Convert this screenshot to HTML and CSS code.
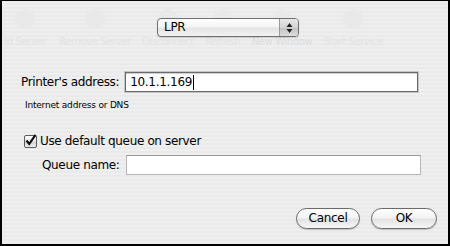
FILE: index.html
```html
<!DOCTYPE html>
<html>
<head>
<meta charset="utf-8">
<link rel="stylesheet" href="styles.css">
</head>
<body>
<div class="dialog">
  <div class="ghost" aria-hidden="true">
    <div class="ghost-item g1"><span class="ghost-icon"></span><span class="ghost-label">ld Server</span></div>
    <div class="ghost-item g2"><span class="ghost-icon"></span><span class="ghost-label">Remove Server</span></div>
    <div class="ghost-item g3"><span class="ghost-icon"></span><span class="ghost-label">Disconnect</span></div>
    <div class="ghost-item g4"><span class="ghost-icon"></span><span class="ghost-label">Refresh</span></div>
    <div class="ghost-item g5"><span class="ghost-icon"></span><span class="ghost-label">New Window</span></div>
    <div class="ghost-item g6"><span class="ghost-icon"></span><span class="ghost-label">Start Service</span></div>
  </div>

  <div class="popup-row">
    <div class="popup">
      <span class="popup-text">LPR</span>
      <span class="popup-arrows">
        <svg width="9" height="12" viewBox="0 0 9 12"><path d="M4.5 1 L7.5 5 L1.5 5 Z M4.5 11 L7.5 7 L1.5 7 Z" fill="#222"/></svg>
      </span>
    </div>
  </div>

  <div class="addr-row">
    <span class="label">Printer's address:</span>
    <div class="field focus"><span>10.1.1.169</span><span class="caret"></span></div>
  </div>
  <div class="hint">Internet address or DNS</div>

  <div class="check-row">
    <span class="checkbox">
      <svg width="13" height="13" viewBox="0 0 13 13"><path d="M2.5 6.5 L5.2 10 L11.5 0.8" fill="none" stroke="#111" stroke-width="2.2"/></svg>
    </span>
    <span class="label">Use default queue on server</span>
  </div>
  <div class="queue-row">
    <span class="label">Queue name:</span>
    <div class="field"></div>
  </div>

  <div class="buttons">
    <div class="btn">Cancel</div>
    <div class="btn">OK</div>
  </div>
</div>
</body>
</html>
```

FILE: styles.css
```css
html, body {
  margin: 0;
  padding: 0;
}
body {
  width: 450px;
  height: 246px;
  overflow: hidden;
  font-family: "DejaVu Sans", sans-serif;
  color: #000;
}
.dialog {
  position: relative;
  box-sizing: border-box;
  width: 450px;
  height: 246px;
  border: 2px solid #000;
  border-top-width: 1px;
  background: repeating-linear-gradient(180deg, #efefef 0, #efefef 2px, #eaeaea 2px, #eaeaea 4px);
  padding: 17px 0 0 0;
  overflow: hidden;
}
.ghost {
  position: absolute;
  inset: 0;
  pointer-events: none;
}
.ghost-item {
  position: absolute;
  top: 8px;
  width: 80px;
  display: flex;
  flex-direction: column;
  align-items: center;
  gap: 7px;
}
.ghost-icon {
  width: 20px;
  height: 20px;
  border-radius: 50%;
  background: #e9e9e9;
}
.ghost-label {
  font-size: 10px;
  color: #e3e3e3;
  white-space: nowrap;
  letter-spacing: -0.4px;
}
.g1 { left: -17px; }
.g2 { left: 53px; }
.g3 { left: 126px; }
.g4 { left: 181px; }
.g5 { left: 240px; }
.g5 .ghost-label { color: #dcdcdc; }
.g6 { left: 311px; }

.popup-row {
  position: relative;
  display: flex;
  justify-content: center;
  padding-left: 6px;
}
.popup {
  display: flex;
  width: 142px;
  height: 19px;
  box-sizing: border-box;
  border: 1px solid #6f6f6f;
  border-radius: 4px;
  background: linear-gradient(180deg, #ffffff 0%, #f4f4f4 45%, #e4e4e4 55%, #f2f2f2 100%);
  box-shadow: 0 1px 1px rgba(0,0,0,0.15);
  overflow: hidden;
}
.popup-text {
  flex: 1;
  font-size: 12px;
  line-height: 17px;
  padding-left: 6px;
  letter-spacing: -0.3px;
}
.popup-arrows {
  width: 18px;
  display: flex;
  align-items: center;
  justify-content: center;
  border-left: 1px solid #9a9a9a;
  background: linear-gradient(180deg, #e8e8e8 0%, #d4d4d4 50%, #c4c4c4 55%, #dcdcdc 100%);
}

.addr-row {
  position: relative;
  display: flex;
  align-items: center;
  margin-top: 35px;
  padding-left: 19px;
  gap: 6px;
}
.label {
  font-size: 12px;
  letter-spacing: -0.35px;
  white-space: nowrap;
}
.field {
  box-sizing: border-box;
  height: 20px;
  background: #fff;
  border: 1px solid #9a9a9a;
  border-top-color: #777;
  font-size: 12px;
  letter-spacing: -0.3px;
  line-height: 18px;
  padding-left: 4px;
  display: flex;
  align-items: center;
}
.addr-row .field {
  width: 293px;
}
.field.focus {
  border-color: #6a6a6a;
  box-shadow: 0 0 0 1px #c4c4c4, inset 0 1px 1px rgba(0,0,0,0.2);
}
.caret {
  display: inline-block;
  width: 1px;
  height: 15px;
  background: #000;
  margin-left: 1px;
}
.hint {
  position: relative;
  font-size: 9px;
  letter-spacing: -0.2px;
  padding-left: 23px;
  margin-top: 8px;
}

.check-row {
  position: relative;
  display: flex;
  align-items: center;
  gap: 3px;
  margin-top: 24px;
  padding-left: 22px;
}
.checkbox {
  box-sizing: border-box;
  width: 13px;
  height: 13px;
  border: 1px solid #5a5a5a;
  border-radius: 2px;
  background: linear-gradient(180deg, #ffffff 0%, #e6e6e6 50%, #d2d2d2 55%, #efefef 100%);
  display: flex;
  align-items: flex-start;
  justify-content: flex-start;
  overflow: visible;
}
.checkbox svg {
  margin: -2px 0 0 -1px;
  flex: none;
}
.queue-row {
  position: relative;
  display: flex;
  align-items: center;
  gap: 7px;
  margin-top: 7px;
  padding-left: 40px;
}
.queue-row .field {
  width: 295px;
  border-color: #b8b8b8;
  border-top-color: #9a9a9a;
}

.buttons {
  position: relative;
  display: flex;
  justify-content: flex-end;
  gap: 11px;
  margin-top: 33px;
  padding-right: 11px;
}
.btn {
  box-sizing: border-box;
  height: 21px;
  border: 1px solid #6a6a6a;
  border-radius: 11px;
  background: linear-gradient(180deg, #ffffff 0%, #f3f3f3 45%, #e3e3e3 55%, #f6f6f6 100%);
  box-shadow: 0 1px 1px rgba(0,0,0,0.2);
  font-size: 12px;
  letter-spacing: -0.3px;
  line-height: 19px;
  text-align: center;
}
.btn:first-child { width: 64px; }
.btn:last-child { width: 66px; }
```
